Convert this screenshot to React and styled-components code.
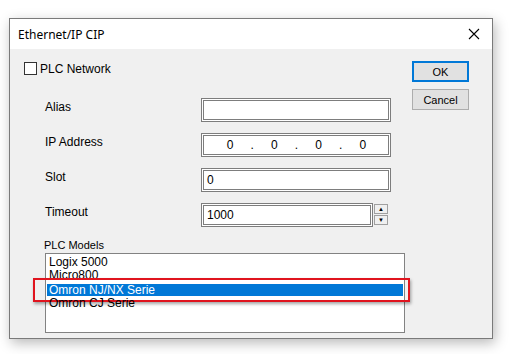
import React from 'react';
import styled, { createGlobalStyle } from 'styled-components';

const GlobalStyle = createGlobalStyle`
  html, body { margin: 0; padding: 0; background: #ffffff; }
  body { font-family: "Liberation Sans", Arial, sans-serif; }
`;

const Page = styled.div`
  width: 517px;
  height: 354px;
  padding: 18px 0 0 9px;
  box-sizing: border-box;
  overflow: hidden;
`;

const Dialog = styled.div`
  width: 484px;
  height: 321px;
  box-sizing: border-box;
  border: 1px solid #7a7a7a;
  background: #f0f0f0;
  box-shadow: 2px 4px 12px rgba(0, 0, 0, 0.28);
  display: flex;
  flex-direction: column;
`;

const TitleBar = styled.div`
  height: 30px;
  background: #ffffff;
  display: flex;
  align-items: center;
  justify-content: space-between;
  padding: 0 8px 0 8px;
  font-family: "Noto Sans", "Open Sans", sans-serif;
  font-size: 12px;
  color: #000;
`;

const Close = styled.svg`
  width: 12px;
  height: 12px;
  margin-right: 4px;
`;

const Body = styled.div`
  flex: 1;
  display: flex;
  padding: 13px 0 0 14px;
  font-size: 11px;
  color: #000;
`;

const Main = styled.div`
  width: 382px;
  display: flex;
  flex-direction: column;
`;

const CheckRow = styled.label`
  display: flex;
  align-items: center;
  gap: 3px;
  height: 13px;
  font-size: 12px;
`;

const Box = styled.span`
  width: 11px;
  height: 11px;
  border: 1px solid #333;
  background: #fff;
`;

const Form = styled.div`
  display: flex;
  flex-direction: column;
  gap: 11px;
  margin-top: 23px;
  padding-left: 21px;
`;

const Row = styled.div`
  display: flex;
  align-items: flex-start;
  height: 24px;
`;

const Label = styled.div`
  width: 156px;
  padding-top: 2px;
  font-size: 12px;
`;

const Field = styled.div`
  width: ${(p) => (p.$narrow ? '172px' : '190px')};
  height: 24px;
  box-sizing: border-box;
  border: 3px double #7d7d7d;
  background: #fff;
  display: flex;
  align-items: center;
  padding-left: 3px;
  font-size: 12px;
`;

const IpGrid = styled.div`
  flex: 1;
  display: grid;
  grid-template-columns: repeat(7, 1fr);
  text-align: center;
  padding: 0 14px 0 12px;
`;

const Spin = styled.div`
  display: flex;
  flex-direction: column;
  gap: 1px;
  margin-left: 1px;
  margin-top: 1px;
`;

const SpinBtn = styled.div`
  width: 14px;
  height: 10px;
  box-sizing: border-box;
  border: 1px solid #a0a0a0;
  background: #f0f0f0;
  display: flex;
  align-items: center;
  justify-content: center;
  font-size: 6px;
  line-height: 1;
`;

const Models = styled.div`
  margin-top: 12px;
  padding-left: 20px;
  display: flex;
  flex-direction: column;
`;

const ModelsLabel = styled.div`
  font-size: 11px;
  height: 12px;
  line-height: 12px;
`;

const List = styled.div`
  margin-top: 2px;
  margin-left: 1px;
  width: 360px;
  height: 80px;
  box-sizing: border-box;
  border: 1px solid #828282;
  background: #fff;
  padding: 2px 1px;
  font-size: 12px;
`;

const Item = styled.div`
  position: relative;
  height: 13px;
  line-height: 13px;
  padding-left: 2px;
  ${(p) =>
    p.$selected &&
    `
    background: #0078d7;
    color: #fff;
    height: 12px;
    line-height: 12px;
    margin: 2px 0 1px;
  `}
`;

const Marker = styled.div`
  position: absolute;
  left: -14px;
  right: -7px;
  top: -6px;
  bottom: -6px;
  border: 2px solid #e0141e;
  box-shadow: 1px 2px 3px rgba(0, 0, 0, 0.35);
`;

const Side = styled.div`
  display: flex;
  flex-direction: column;
  gap: 7px;
  margin-top: -1px;
  margin-left: 6px;
`;

const Button = styled.button`
  width: 57px;
  height: 21px;
  box-sizing: border-box;
  border: ${(p) => (p.$default ? '2px solid #0078d7' : '1px solid #adadad')};
  background: #e1e1e1;
  font-family: "Liberation Sans", Arial, sans-serif;
  font-size: 11px;
  color: #000;
  padding: 0;
`;

export default function App() {
  return (
    <Page>
      <GlobalStyle />
      <Dialog>
        <TitleBar>
          <span>Ethernet/IP CIP</span>
          <Close viewBox="0 0 12 12">
            <path d="M1 1 L11 11 M11 1 L1 11" stroke="#000" strokeWidth="1.1" />
          </Close>
        </TitleBar>
        <Body>
          <Main>
            <CheckRow>
              <Box />
              <span>PLC Network</span>
            </CheckRow>
            <Form>
              <Row>
                <Label>Alias</Label>
                <Field />
              </Row>
              <Row>
                <Label>IP Address</Label>
                <Field>
                  <IpGrid>
                    <span>0</span><span>.</span><span>0</span><span>.</span>
                    <span>0</span><span>.</span><span>0</span>
                  </IpGrid>
                </Field>
              </Row>
              <Row>
                <Label>Slot</Label>
                <Field>0</Field>
              </Row>
              <Row>
                <Label>Timeout</Label>
                <Field $narrow>1000</Field>
                <Spin>
                  <SpinBtn>▲</SpinBtn>
                  <SpinBtn>▼</SpinBtn>
                </Spin>
              </Row>
            </Form>
            <Models>
              <ModelsLabel>PLC Models</ModelsLabel>
              <List>
                <Item>Logix 5000</Item>
                <Item>Micro800</Item>
                <Item $selected>
                  Omron NJ/NX Serie
                  <Marker />
                </Item>
                <Item>Omron CJ Serie</Item>
              </List>
            </Models>
          </Main>
          <Side>
            <Button $default>OK</Button>
            <Button>Cancel</Button>
          </Side>
        </Body>
      </Dialog>
    </Page>
  );
}
